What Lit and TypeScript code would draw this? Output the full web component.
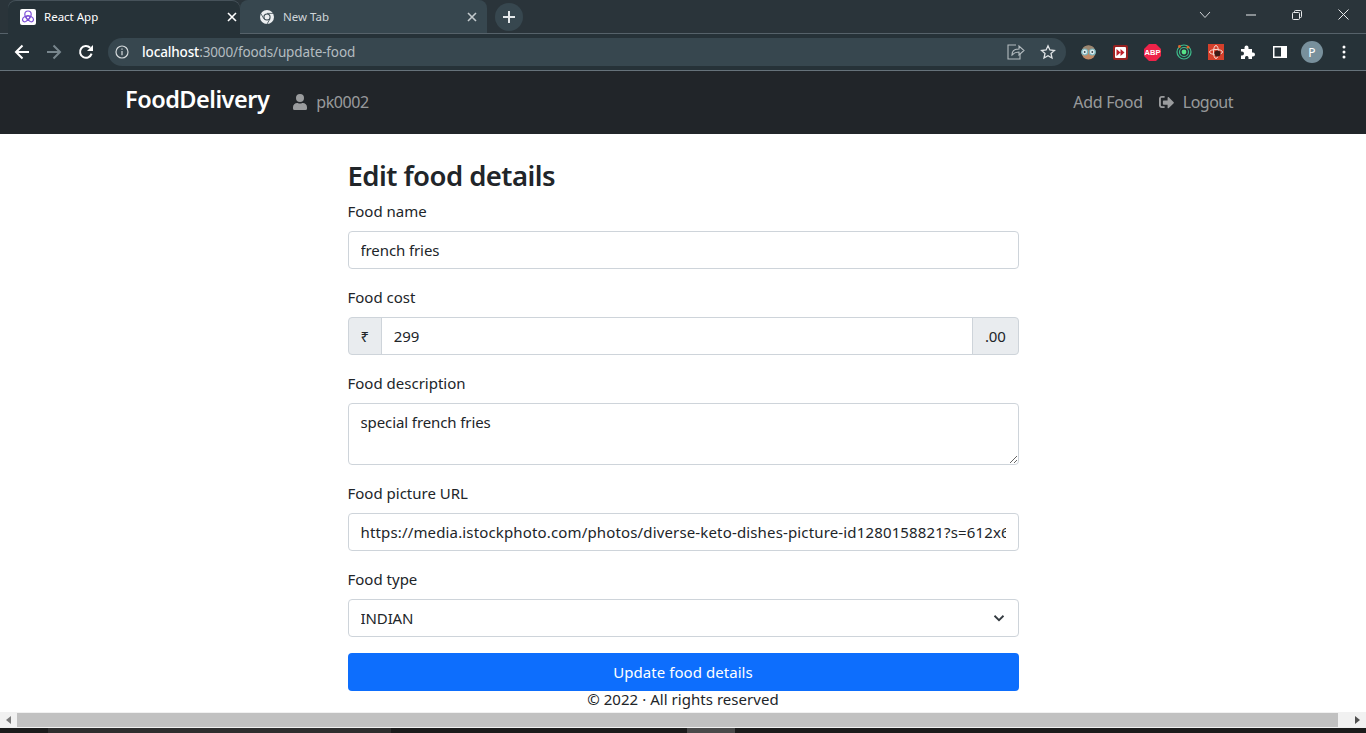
import { LitElement, html, css, svg } from "lit";
import { customElement } from "lit/decorators.js";

const closeIcon = svg`<svg width="10" height="10" viewBox="0 0 10 10"><path d="M1 1l8 8M9 1l-8 8" stroke="currentColor" stroke-width="1.6" fill="none"/></svg>`;

@customElement("app-root")
export class AppRoot extends LitElement {
  static styles = css`
    :host {
      display: flex;
      flex-direction: column;
      height: 733px;
      overflow: hidden;
      font-family: "Noto Sans", "Open Sans", sans-serif;
      color: #212529;
      background: #fff;
    }
    .strip {
      height: 34px;
      flex: none;
      display: flex;
      background: #2a343a;
    }
    .lead {
      width: 8px;
      flex: none;
      box-sizing: border-box;
      border-bottom: 1px solid #56626a;
    }
    .tab {
      height: 34px;
      flex: none;
      display: flex;
      align-items: center;
      box-sizing: border-box;
      font-size: 11.5px;
      border-radius: 8px 8px 0 0;
    }
    .tab.active {
      width: 232px;
      padding: 0 0 1px 12px;
      background: #263238;
      color: #fff;
      box-shadow: inset 0 1px 0 #46525a;
    }
    .tab.other {
      width: 247px;
      padding: 0 7px 0 19px;
      background: #37474f;
      color: #cfd5d8;
      border-bottom: 1px solid #56626a;
    }
    .tab .title {
      flex: 1;
      margin-left: 8px;
    }
    .favicon {
      width: 16px;
      height: 16px;
      flex: none;
      background: #fff;
      border-radius: 2px;
    }
    .tab .x {
      display: flex;
      width: 16px;
      justify-content: center;
    }
    .tab.active .x { color: #fff; }
    .tab.other .x { color: #c3cacd; }
    .rest {
      flex: 1;
      display: flex;
      align-items: flex-start;
      box-sizing: border-box;
      border-bottom: 1px solid #56626a;
    }
    .plus {
      width: 28px;
      height: 28px;
      margin: 3px 0 0 8px;
      border-radius: 50%;
      background: #37474f;
      color: #e4e8ea;
      display: flex;
      align-items: center;
      justify-content: center;
    }
    .window {
      margin-left: auto;
      display: flex;
      color: #e8eaec;
    }
    .window span {
      width: 46px;
      height: 29px;
      display: flex;
      align-items: center;
      justify-content: center;
    }
    .toolbar {
      height: 37px;
      flex: none;
      box-sizing: border-box;
      display: flex;
      align-items: center;
      padding-left: 6px;
      background: #263238;
      color: #fff;
      border-bottom: 1px solid #66727a;
    }
    .btn {
      width: 32px;
      height: 32px;
      flex: none;
      display: flex;
      align-items: center;
      justify-content: center;
    }
    .url {
      width: 958px;
      height: 28px;
      flex: none;
      margin: 0 6px;
      box-sizing: border-box;
      padding: 0 10px 0 7px;
      border-radius: 14px;
      background: #37474f;
      display: flex;
      align-items: center;
      font-size: 13.5px;
      letter-spacing: -0.13px;
      color: #b4bcc0;
    }
    .url b {
      font-weight: 500;
      color: #fff;
    }
    .url .addr {
      margin-left: 13px;
      flex: 1;
    }
    .url .share { margin-right: 15px; }
    .ext-label {
      font-family: "Liberation Sans", sans-serif;
      font-size: 7.5px;
      font-weight: 700;
    }
    .avatar {
      width: 22px;
      height: 22px;
      border-radius: 50%;
      background: #78909c;
      color: #fff;
      font-size: 12px;
      display: flex;
      align-items: center;
      justify-content: center;
    }
    .navbar {
      height: 63px;
      flex: none;
      box-sizing: border-box;
      display: flex;
      align-items: center;
      padding: 0 125px 2px 125px;
      background: #212529;
      color: rgba(255, 255, 255, 0.55);
      font-size: 16px;
    }
    .brand {
      color: #fff;
      font-size: 23.5px;
      font-weight: 600;
      letter-spacing: -0.5px;
      margin: -6px 24px 0 0;
    }
    .navlink {
      display: flex;
      align-items: center;
      gap: 9px;
      letter-spacing: -0.45px;
    }
    .spacer { flex: 1; }
    .navlink.add {
      margin-right: 16px;
      letter-spacing: -0.25px;
    }
    .navlink.out {
      margin-right: 8px;
      letter-spacing: -0.5px;
    }
    main {
      flex: 1;
      min-height: 0;
      overflow: hidden;
      display: flex;
      flex-direction: column;
      align-items: center;
      padding-top: 24px;
    }
    form {
      width: 671px;
      display: flex;
      flex-direction: column;
    }
    h2 {
      margin: 0 0 5px;
      font-size: 27.5px;
      line-height: 36px;
      font-weight: 600;
      letter-spacing: -0.55px;
    }
    label {
      display: block;
      font-size: 15px;
      line-height: 24px;
      margin-bottom: 8px;
    }
    .field { margin-bottom: 16px; }
    input, textarea, select {
      display: block;
      width: 100%;
      box-sizing: border-box;
      height: 38px;
      padding: 6px 12px;
      font: inherit;
      font-size: 15px;
      line-height: 24px;
      letter-spacing: -0.1px;
      color: #212529;
      background: #fff;
      border: 1px solid #ced4da;
      border-radius: 4px;
      outline: none;
    }
    input.long { letter-spacing: 0.15px; }
    textarea {
      height: 62px;
      overflow: hidden;
    }
    select { appearance: none; }
    .select { position: relative; }
    .chev {
      position: absolute;
      right: 14px;
      top: 13px;
      pointer-events: none;
    }
    .group { display: flex; }
    .group input {
      flex: 1;
      min-width: 0;
      border-radius: 0;
      margin: 0 -1px;
    }
    .addon {
      display: flex;
      align-items: center;
      padding: 0 12px;
      font-size: 15px;
      background: #e9ecef;
      border: 1px solid #ced4da;
      letter-spacing: -0.25px;
    }
    .addon.left { border-radius: 4px 0 0 4px; }
    .addon.right { border-radius: 0 4px 4px 0; }
    .submit {
      height: 38px;
      width: 100%;
      border: none;
      border-radius: 4px;
      background: #0d6efd;
      color: #fff;
      font: inherit;
      font-size: 15px;
      letter-spacing: 0.05px;
    }
    footer {
      font-size: 15px;
      line-height: 16px;
      letter-spacing: 0.04px;
    }
    .hscroll {
      height: 16px;
      flex: none;
      display: flex;
      align-items: center;
      background: #f1f1f1;
    }
    .hscroll .arrow {
      width: 17px;
      display: flex;
      justify-content: center;
    }
    .hscroll .thumb {
      width: 1321px;
      height: 14px;
      background: #c1c1c1;
      margin-right: 11px;
    }
    .taskbar {
      height: 5px;
      flex: none;
      background: #1b1b1b;
      display: flex;
    }
    .taskbar .a { width: 48px; }
    .taskbar .b { width: 343px; background: #2e2e2e; }
    .taskbar .c { width: 296px; }
    .taskbar .d { width: 48px; background: #4a4a4a; }
  `;

  render() {
    return html`
      <div class="strip">
        <span class="lead"></span>
        <div class="tab active">
          <span class="favicon">
            <svg width="16" height="16" viewBox="0 0 16 16" fill="none" stroke="#7c4dd6" stroke-width="1.2">
              <path d="M8 2c2 0 3.200 1.500 3.200 3.200 0 2.800-3 5.800-5.500 7.300-1.500.8-3.200-.2-3.200-2 0-2.500 3.500-3.500 5.500-3.500s5.500 1 5.500 3.500c0 1.800-1.700 2.800-3.200 2C7.800 11 4.800 8 4.800 5.200 4.800 3.500 6 2 8 2z" />
              <circle cx="8" cy="8.400" r="1.800" />
            </svg>
          </span>
          <span class="title">React App</span>
          <span class="x">${closeIcon}</span>
        </div>
        <div class="tab other">
          <svg width="16" height="16" viewBox="0 0 16 16">
            <circle cx="8" cy="8" r="7" fill="#eceff1" />
            <circle cx="8" cy="8" r="3.600" fill="#37474f" />
            <circle cx="8" cy="8" r="2.500" fill="#eceff1" />
            <path d="M8 4.400h6.400M4.900 9.800L1.700 4.300M11.100 9.800L7.900 15.200" stroke="#37474f" stroke-width="0.8" />
          </svg>
          <span class="title">New Tab</span>
          <span class="x">${closeIcon}</span>
        </div>
        <div class="rest">
          <div class="plus">
            <svg width="12" height="12" viewBox="0 0 12 12"><path d="M6 0v12M0 6h12" stroke="currentColor" stroke-width="2" /></svg>
          </div>
          <div class="window">
            <span>
              <svg width="12" height="8" viewBox="0 0 12 8"><path d="M1 1l5 5.500L11 1" stroke="#cfd3d6" fill="none" /></svg>
            </span>
            <span>
              <svg width="10" height="2" viewBox="0 0 10 2"><path d="M0 1h10" stroke="currentColor" /></svg>
            </span>
            <span>
              <svg width="10" height="10" viewBox="0 0 10 10" fill="none" stroke="currentColor">
                <rect x="0.500" y="2.500" width="7" height="7" rx="1" />
                <path d="M2.500 2.500V1.500a1 1 0 0 1 1-1h5a1 1 0 0 1 1 1v5a1 1 0 0 1-1 1h-1" />
              </svg>
            </span>
            <span>
              <svg width="11" height="11" viewBox="0 0 11 11"><path d="M.5.5l10 10M10.500.5l-10 10" stroke="currentColor" /></svg>
            </span>
          </div>
        </div>
      </div>
      <div class="toolbar">
        <span class="btn">
          <svg width="16" height="16" viewBox="0 0 16 16" fill="none" stroke="#fff" stroke-width="2"><path d="M15 8H2.500M8.500 1.500L2 8l6.500 6.500" /></svg>
        </span>
        <span class="btn">
          <svg width="16" height="16" viewBox="0 0 16 16" fill="none" stroke="#78868d" stroke-width="2"><path d="M1 8h12.500M7.500 1.500L14 8l-6.500 6.500" /></svg>
        </span>
        <span class="btn">
          <svg width="16" height="16" viewBox="0 0 16 16" fill="none">
            <path d="M13.600 9.600A5.900 5.900 0 1 1 12.200 3.800" stroke="#fff" stroke-width="2" />
            <path d="M15 1v6H9z" fill="#fff" />
          </svg>
        </span>
        <div class="url">
          <svg width="14" height="14" viewBox="0 0 14 14" fill="none" stroke="#d5dadc" stroke-width="1.200">
            <circle cx="7" cy="7" r="6" />
            <path d="M7 6v4.200M7 3.400v1.300" />
          </svg>
          <span class="addr"><b>localhost</b>:3000/foods/update-food</span>
          <svg class="share" width="18" height="16" viewBox="0 0 18 16" fill="none" stroke="#b4bcc0" stroke-width="1.100">
            <path d="M9 1h-8v14h12v-5" />
            <path d="M5 11c0-4 3-6 7-6V2l5 4.500-5 4.500V8c-3 0-5 1-7 3z" />
          </svg>
          <svg width="16" height="16" viewBox="0 0 16 16" fill="none" stroke="#e0e4e6" stroke-width="1.300">
            <path d="M8 1.800l1.900 4.200 4.500.5-3.400 3 1 4.500L8 11.700 4 14l1-4.500-3.400-3 4.500-.5z" />
          </svg>
        </div>
        <span class="btn">
          <svg width="17" height="17" viewBox="0 0 17 17">
            <circle cx="8.500" cy="8.500" r="7" fill="#c08a66" />
            <path d="M2 6a7 7 0 0 1 13 0z" fill="#9a8670" />
            <circle cx="4.700" cy="8" r="3" fill="#dcecee" stroke="#79b4bd" stroke-width="1.200" />
            <circle cx="12.300" cy="8" r="3" fill="#dcecee" stroke="#79b4bd" stroke-width="1.200" />
            <circle cx="4.700" cy="8" r="0.900" fill="#37474f" />
            <circle cx="12.300" cy="8" r="0.900" fill="#37474f" />
          </svg>
        </span>
        <span class="btn">
          <svg width="15" height="15" viewBox="0 0 15 15">
            <rect width="15" height="15" rx="2" fill="#98201f" />
            <rect x="2" y="2" width="11" height="11" rx="1" fill="#fff" />
            <path d="M3.500 4l4 3.500-4 3.500zM7.500 4l4 3.500-4 3.500z" fill="#c01f2a" />
          </svg>
        </span>
        <span class="btn">
          <svg width="17" height="17" viewBox="0 0 17 17">
            <path d="M5 0h7l5 5v7l-5 5H5l-5-5V5z" fill="#ee2349" />
            <text class="ext-label" x="8.500" y="11.300" text-anchor="middle" fill="#fff">ABP</text>
          </svg>
        </span>
        <span class="btn">
          <svg width="16" height="16" viewBox="0 0 16 16" fill="none">
            <circle cx="8" cy="8" r="7" stroke="#3ebd8c" stroke-width="1.200" />
            <circle cx="8" cy="8" r="4.500" stroke="#3ebd8c" stroke-width="1.200" />
            <circle cx="8" cy="8" r="2.400" fill="#57e389" />
            <circle cx="3.500" cy="2.500" r="1.400" fill="#e0662c" />
            <circle cx="12" cy="3.200" r="1.400" fill="#e0662c" />
          </svg>
        </span>
        <span class="btn">
          <svg width="16" height="16" viewBox="0 0 16 16">
            <rect width="16" height="16" fill="#d5402b" />
            <ellipse cx="8" cy="8" rx="6.500" ry="2.500" fill="none" stroke="#f9ddd6" />
            <ellipse cx="8" cy="8" rx="2.500" ry="6.500" fill="none" stroke="#f9ddd6" />
            <circle cx="9.500" cy="9.500" r="3" fill="#3a1a16" />
          </svg>
        </span>
        <span class="btn">
          <svg width="16" height="16" viewBox="0 0 16 16">
            <path d="M1 5h3.500V3.500a2 2 0 0 1 4 0V5H12v3.500h1a2 2 0 0 1 0 4h-1V15H8.500v-1.500a1.800 1.800 0 0 0-3.500 0V15H1v-3.500h1a2 2 0 0 0 0-4H1z" fill="#fff" />
          </svg>
        </span>
        <span class="btn">
          <svg width="14" height="12" viewBox="0 0 14 12">
            <rect width="14" height="12" fill="#fff" />
            <rect x="1.500" y="1.500" width="6.500" height="9" fill="#263238" />
          </svg>
        </span>
        <span class="btn"><span class="avatar">P</span></span>
        <span class="btn">
          <svg width="4" height="14" viewBox="0 0 4 14" fill="#fff">
            <circle cx="2" cy="2" r="1.500" />
            <circle cx="2" cy="7" r="1.500" />
            <circle cx="2" cy="12" r="1.500" />
          </svg>
        </span>
      </div>
      <nav class="navbar">
        <span class="brand">FoodDelivery</span>
        <span class="navlink">
          <svg width="14" height="16" viewBox="0 0 448 512" fill="currentColor">
            <path d="M224 256a128 128 0 1 0 0-256 128 128 0 0 0 0 256zm89.600 32h-16.700a174 174 0 0 1-145.800 0h-16.700A134.400 134.400 0 0 0 0 422.400V464a48 48 0 0 0 48 48h352a48 48 0 0 0 48-48v-41.600A134.400 134.400 0 0 0 313.600 288z" />
          </svg>
          pk0002
        </span>
        <span class="spacer"></span>
        <span class="navlink add">Add Food</span>
        <span class="navlink out">
          <svg width="15" height="14" viewBox="0 0 512 448" fill="currentColor">
            <path d="M502 231L334 63c-15-15-41-4-41 17v96H157c-13 0-24 11-24 24v96c0 13 11 24 24 24h136v96c0 21 26 32 41 17l168-168c9-10 9-25 0-34zM192 420v-40c0-7-5-12-12-12H96c-18 0-32-14-32-32V112c0-18 14-32 32-32h84c7 0 12-5 12-12V28c0-7-5-12-12-12H96C43 16 0 59 0 112v224c0 53 43 96 96 96h84c7 0 12-5 12-12z" />
          </svg>
          Logout
        </span>
      </nav>
      <main>
        <form>
          <h2>Edit food details</h2>
          <div class="field">
            <label>Food name</label>
            <input value="french fries" />
          </div>
          <div class="field">
            <label>Food cost</label>
            <div class="group">
              <span class="addon left">₹</span>
              <input value="299" />
              <span class="addon right">.00</span>
            </div>
          </div>
          <div class="field">
            <label>Food description</label>
            <textarea .value=${"special french fries"}></textarea>
          </div>
          <div class="field">
            <label>Food picture URL</label>
            <input class="long" value="https://media.istockphoto.com/photos/diverse-keto-dishes-picture-id1280158821?s=612x612" />
          </div>
          <div class="field">
            <label>Food type</label>
            <div class="select">
              <select><option>INDIAN</option></select>
              <svg class="chev" width="12" height="12" viewBox="0 0 16 16" fill="none" stroke="#343a40" stroke-width="2.400">
                <path d="M2 5l6 6 6-6" />
              </svg>
            </div>
          </div>
          <button class="submit" type="button">Update food details</button>
        </form>
        <footer>© 2022 · All rights reserved</footer>
      </main>
      <div class="hscroll">
        <span class="arrow">
          <svg width="5" height="8" viewBox="0 0 5 8"><path d="M5 0v8L0 4z" fill="#7a7a7a" /></svg>
        </span>
        <span class="thumb"></span>
        <span class="arrow">
          <svg width="5" height="8" viewBox="0 0 5 8"><path d="M0 0v8l5-4z" fill="#505050" /></svg>
        </span>
      </div>
      <div class="taskbar">
        <span class="a"></span><span class="b"></span><span class="c"></span><span class="d"></span>
      </div>
    `;
  }
}
